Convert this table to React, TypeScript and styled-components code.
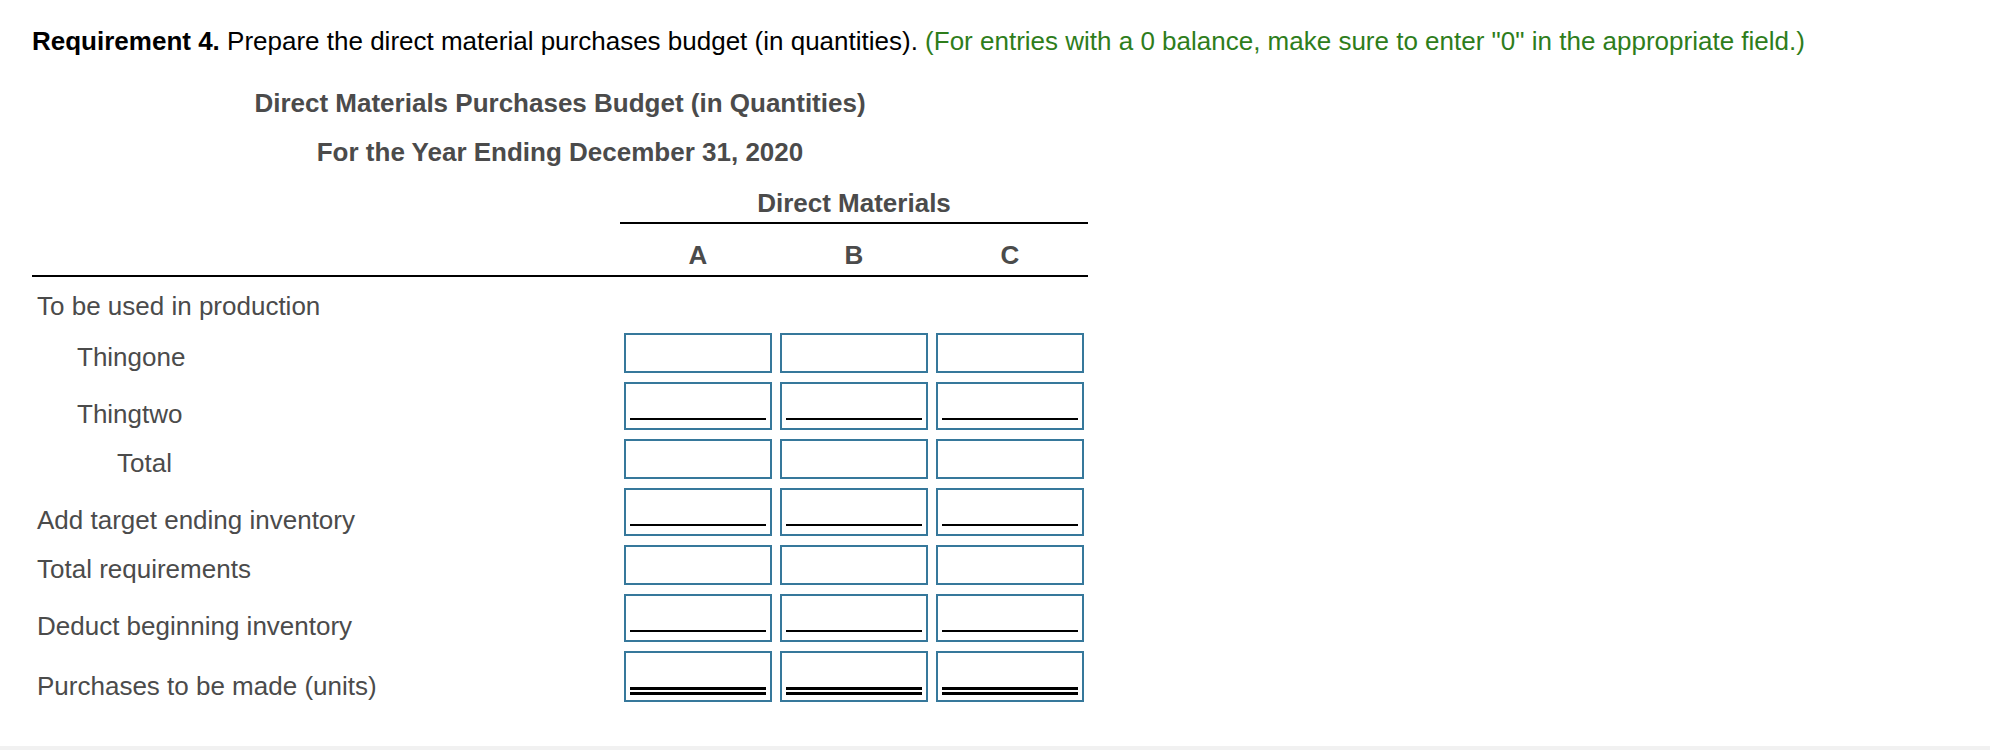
import React from "react";
import styled, { createGlobalStyle } from "styled-components";

const GlobalStyle = createGlobalStyle`
  html, body {
    margin: 0;
    padding: 0;
    background: #ffffff;
  }
  body {
    font-family: "Liberation Sans", Arial, Helvetica, sans-serif;
  }
`;

const Page = styled.div`
  height: 750px;
  display: flex;
  flex-direction: column;
  overflow: hidden;
`;

const Content = styled.div`
  flex: 1;
  padding: 26px 0 0 32px;
  font-size: 26px;
  line-height: 30px;
`;

const Footer = styled.div`
  height: 4px;
  background: #f1f1f1;
`;

const Requirement = styled.p`
  margin: 0;
  color: #000;
  white-space: nowrap;
`;

const Strong = styled.strong`
  font-weight: 700;
`;

const Hint = styled.span`
  color: #2e7d1b;
`;

const Sheet = styled.div`
  width: 1056px;
`;

const Title = styled.div<{ $gap: number }>`
  margin-top: ${(p) => p.$gap}px;
  text-align: center;
  font-weight: 700;
  color: #4b4b4b;
  white-space: nowrap;
`;

const Row = styled.div`
  display: grid;
  grid-template-columns: 588px repeat(3, 156px);
  align-items: end;
`;

const GroupHead = styled.div`
  grid-column: 2 / 5;
  text-align: center;
  font-weight: 700;
  color: #4b4b4b;
  padding: 21px 0 4px;
  border-bottom: 2px solid #000;
`;

const ColumnHeadRow = styled(Row)`
  border-bottom: 2px solid #000;
`;

const ColumnHead = styled.div`
  text-align: center;
  font-weight: 700;
  color: #4b4b4b;
  padding: 16px 0 5px;
`;

const BodyRow = styled(Row)<{ $section?: boolean }>`
  padding: ${(p) => (p.$section ? "0 0 7px" : "4px 0 5px")};
  height: ${(p) => (p.$section ? "52px" : "auto")};
  box-sizing: border-box;
`;

const Label = styled.div<{ $indent: number }>`
  padding: 0 0 1px ${(p) => p.$indent}px;
  color: #4b4b4b;
  white-space: nowrap;
`;

const Cell = styled.div`
  padding: 0 4px;
`;

type Kind = "plain" | "single" | "double";

const boxHeight: Record<Kind, number> = { plain: 40, single: 48, double: 51 };

const Box = styled.div<{ $kind: Kind }>`
  height: ${(p) => boxHeight[p.$kind]}px;
  box-sizing: border-box;
  border: 2px solid #36789b;
  background: #fff;
  display: flex;
  flex-direction: column;
  justify-content: flex-end;
  padding: 0 4px ${(p) => (p.$kind === "double" ? 5 : 8)}px;
`;

const Field = styled.input`
  flex: 1;
  min-height: 0;
  width: 100%;
  border: none;
  outline: none;
  background: transparent;
  padding: 0;
  font: inherit;
  font-size: 20px;
  text-align: right;
`;

const SingleRule = styled.div`
  height: 2px;
  background: #000;
`;

const DoubleRule = styled.div`
  height: 2px;
  border-top: 3px solid #000;
  border-bottom: 3px solid #000;
`;

const InputBox: React.FC<{ kind: Kind }> = ({ kind }) => (
  <Cell>
    <Box $kind={kind}>
      <Field aria-label="amount" />
      {kind === "single" && <SingleRule />}
      {kind === "double" && <DoubleRule />}
    </Box>
  </Cell>
);

const rows: { label: string; indent: number; kind: Kind }[] = [
  { label: "Thingone", indent: 45, kind: "plain" },
  { label: "Thingtwo", indent: 45, kind: "single" },
  { label: "Total", indent: 85, kind: "plain" },
  { label: "Add target ending inventory", indent: 5, kind: "single" },
  { label: "Total requirements", indent: 5, kind: "plain" },
  { label: "Deduct beginning inventory", indent: 5, kind: "single" },
  { label: "Purchases to be made (units)", indent: 5, kind: "double" },
];

export default function App() {
  return (
    <Page>
      <GlobalStyle />
      <Content>
        <Requirement>
          <Strong>Requirement 4.</Strong> Prepare the direct material purchases budget (in quantities).{" "}
          <Hint>(For entries with a 0 balance, make sure to enter "0" in the appropriate field.)</Hint>
        </Requirement>
        <Sheet>
          <Title $gap={32}>Direct Materials Purchases Budget (in Quantities)</Title>
          <Title $gap={19}>For the Year Ending December 31, 2020</Title>
          <Row>
            <GroupHead>Direct Materials</GroupHead>
          </Row>
          <ColumnHeadRow>
            <div />
            <ColumnHead>A</ColumnHead>
            <ColumnHead>B</ColumnHead>
            <ColumnHead>C</ColumnHead>
          </ColumnHeadRow>
          <BodyRow $section>
            <Label $indent={5}>To be used in production</Label>
          </BodyRow>
          {rows.map((r) => (
            <BodyRow key={r.label}>
              <Label $indent={r.indent}>{r.label}</Label>
              <InputBox kind={r.kind} />
              <InputBox kind={r.kind} />
              <InputBox kind={r.kind} />
            </BodyRow>
          ))}
        </Sheet>
      </Content>
      <Footer />
    </Page>
  );
}
